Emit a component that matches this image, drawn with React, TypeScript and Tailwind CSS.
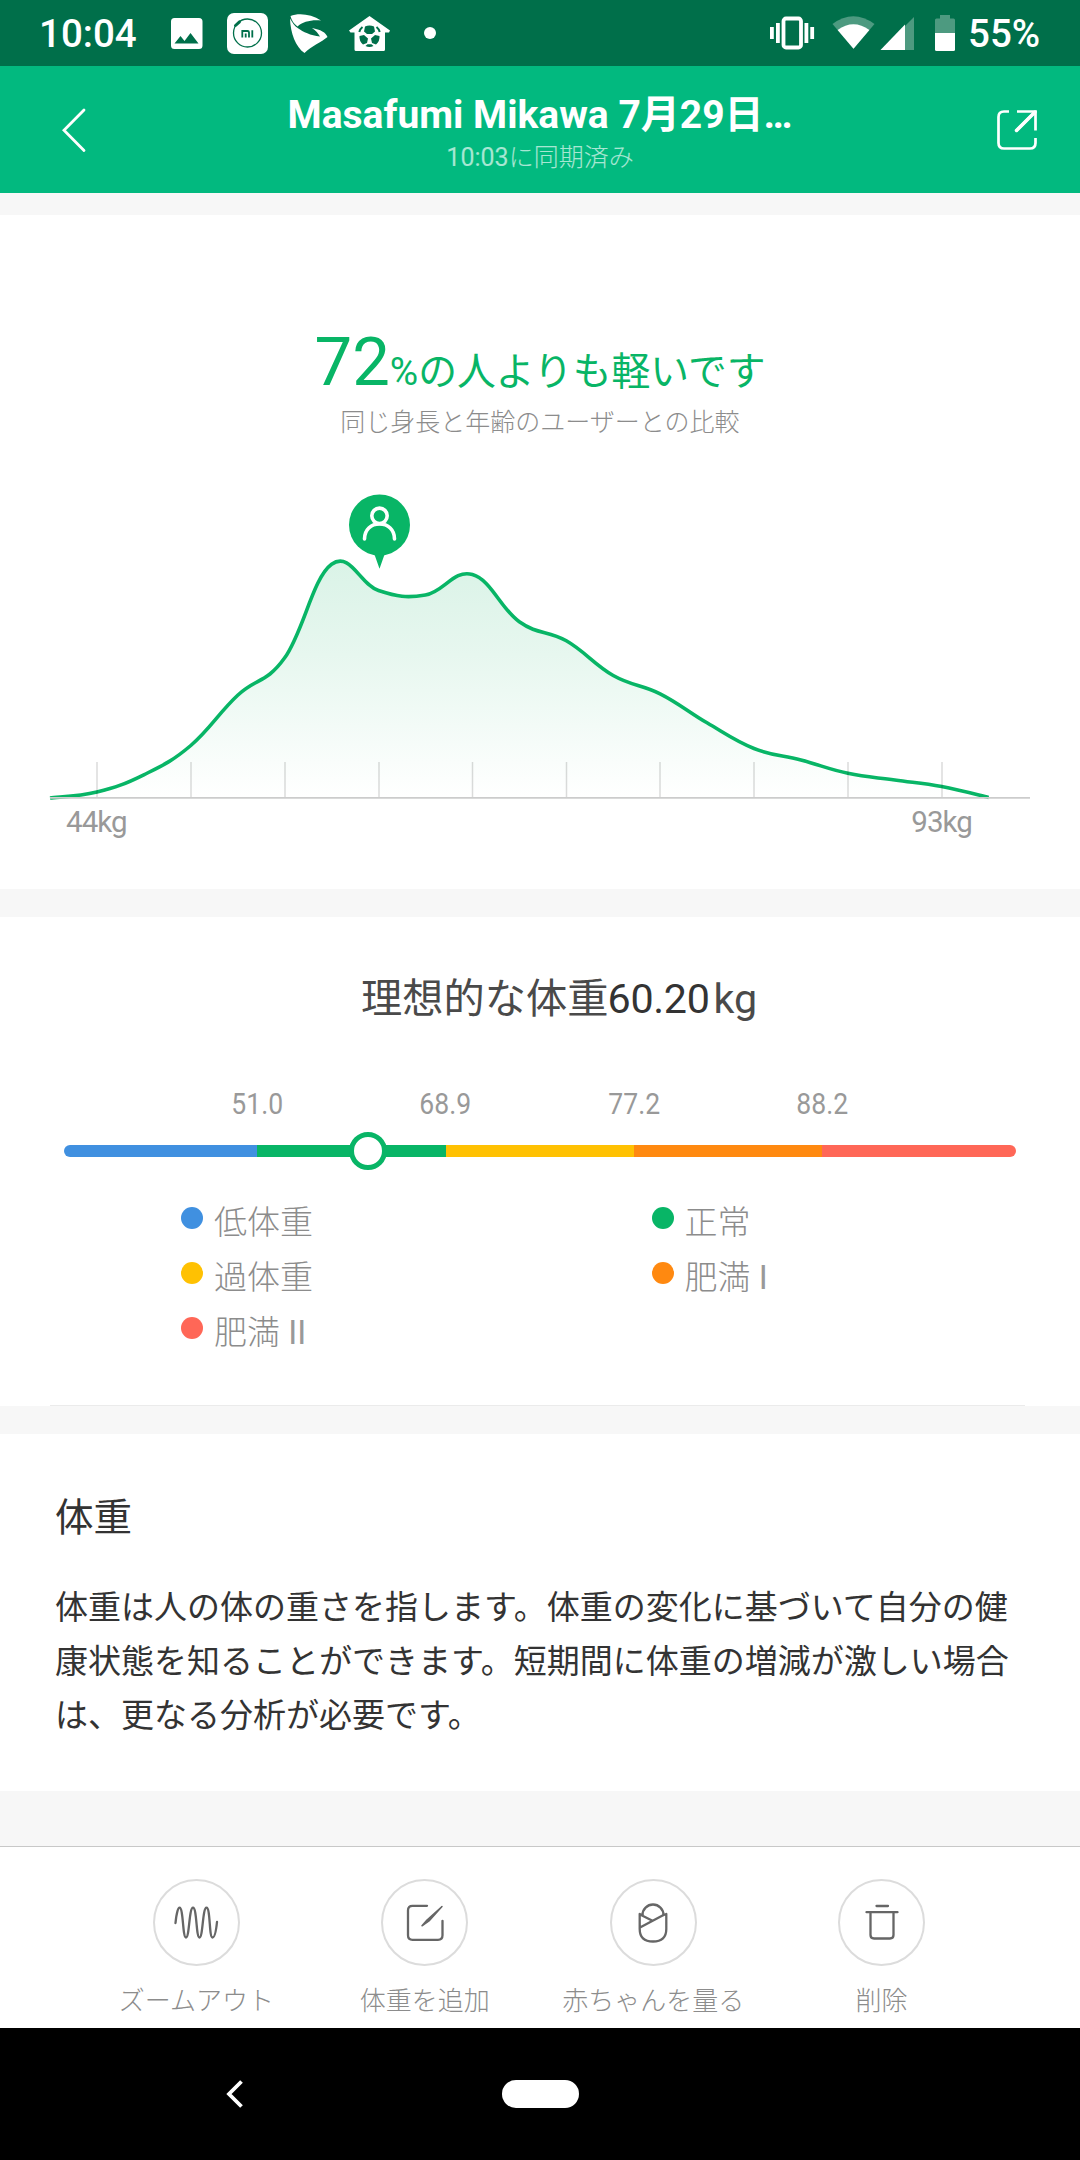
import type { ReactNode } from "react";

type Point = [number, number];

const curve: Point[] = [
  [50, 798],
  [96.9, 792],
  [143.8, 774.8],
  [190.8, 745.5],
  [237.7, 695.3],
  [284.7, 657.8],
  [331.6, 564.3],
  [378.5, 590.5],
  [425.4, 595],
  [472.4, 574.5],
  [519.3, 621.8],
  [566.3, 640.8],
  [613.2, 675.5],
  [660.1, 693.8],
  [707, 722.8],
  [754, 748.5],
  [800.9, 760],
  [847.9, 773.3],
  [894.8, 780],
  [941.7, 786.5],
  [988.7, 797.5]
];

const ticks = [97, 191, 285, 379, 472.5, 566.5, 660, 754, 848, 942];

const segments = [
  { width: 193.5, className: "bg-[#4090e0] rounded-l-full" },
  { width: 188.5, className: "bg-[#08b566]" },
  { width: 188.5, className: "bg-[#ffc102]" },
  { width: 188, className: "bg-[#ff8910]" },
  { width: 194, className: "bg-[#ff6757] rounded-r-full" }
];

const thresholds = ["51.0", "68.9", "77.2", "88.2"];

const legend = [
  { label: "低体重", grade: "", dot: "bg-[#4090e0]" },
  { label: "正常", grade: "", dot: "bg-[#08b566]" },
  { label: "過体重", grade: "", dot: "bg-[#ffc102]" },
  { label: "肥満", grade: " I", dot: "bg-[#ff8910]" },
  { label: "肥満", grade: " II", dot: "bg-[#ff6757]" }
];

function smoothPath(points: Point[]) {
  const k = 0.2;
  let d = `M${points[0][0]} ${points[0][1]}`;
  for (let i = 1; i < points.length; i++) {
    const p0 = points[Math.max(i - 2, 0)];
    const p1 = points[i - 1];
    const p2 = points[i];
    const p3 = points[Math.min(i + 1, points.length - 1)];
    d += `C${p1[0] + (p2[0] - p0[0]) * k} ${p1[1] + (p2[1] - p0[1]) * k} ${p2[0] - (p3[0] - p1[0]) * k} ${p2[1] - (p3[1] - p1[1]) * k} ${p2[0]} ${p2[1]}`;
  }
  return d;
}

function StatusBar() {
  return (
    <div className="flex h-[66px] items-center bg-[#006f4a] pl-[39px] pr-[41px] text-[38.5px] font-medium leading-[66px] text-white">
      <span className="w-[131px] pt-px">10:04</span>
      <svg className="h-[66px] w-[280px]" viewBox="170 0 280 66" fill="#fff">
        <path
          fillRule="evenodd"
          d="M174.500 18h24.500a3.500 3.500 0 0 1 3.500 3.500v24a3.500 3.500 0 0 1-3.500 3.500h-24.500a3.500 3.500 0 0 1-3.500-3.500v-24a3.500 3.500 0 0 1 3.500-3.500zM174.500 43.500h24l-8-10.500-6 8-4-5z"
        />
        <rect x="227" y="13" width="41" height="41" rx="7" />
        <circle cx="247.500" cy="33" r="14" fill="none" stroke="#006f4a" strokeWidth="1.300" />
        <path d="M235.500 26l4.500-4.500" stroke="#fff" strokeWidth="8" />
        <path d="M235.500 25.500l4-3.700" stroke="#006f4a" strokeWidth="3" strokeLinecap="round" />
        <path
          d="M242.300 37.500v-6.500h5.200q1.500 0 1.500 1.500v5M245.700 33.500v4M252.300 30.300v7.200"
          fill="none"
          stroke="#006f4a"
          strokeWidth="1.800"
        />
        <path d="M290.500 16c8-3.500 21-2 30.500 4.500-9-1-18.500 1-23.500 6q-5.500-4-7-10.500zM290 18.500c2.500 4.500 4.500 7.500 8 9.700 5 3.500 12.500 7.300 22 8.300-2-3-4-6-8-8.500 8.500 1.500 14 4.500 15.500 9-6 5-16 9-23 16-9-6-14-20-14.500-34.500z" />
        <path d="M369.500 16l20.500 14.500-1 2h-4v17q0 1.500-1.500 1.500h-27.500q-1.500 0-1.500-1.500v-17h-4l-1.500-2z" />
        <g fill="#006f4a">
          <path d="M365 26.500q4.500-2 9 0l1 5-3 2.500h-5l-3-2.500zM359.500 36l4.500-1 4 3.500-1 4.500-4 1.500q-4-3.500-3.500-8.500zM379.500 36l-4.500-1-4 3.500 1 4.500 4 1.500q4-3.500 3.500-8.500zM365.500 46l2-1.800h4l2 1.800q-4 2-8 0z" />
          <path
            d="M359.300 32q.7-3 3.200-5M379.700 32q-.7-3-3.200-5"
            fill="none"
            stroke="#006f4a"
            strokeWidth="2"
          />
        </g>
        <circle cx="430" cy="33" r="6" />
      </svg>
      <svg className="ml-auto h-[66px] w-[190px]" viewBox="768 0 190 66" fill="#fff">
        <rect x="783.500" y="18.500" width="17.500" height="29" rx="2.500" fill="none" stroke="#fff" strokeWidth="3.800" />
        <path d="M776 23h3.800v20H776zM770 27h3.800v12H770zM804.500 23h3.800v20h-3.800zM810.300 27h3.800v12h-3.800z" />
        <path d="M832.500 24q20.700-15.500 42 0l-21 24.700z" opacity=".3" />
        <path d="M837.600 30q15.800-11.500 31.800 0l-15.900 18.700z" />
        <path d="M914 17v33h-33z" opacity=".3" />
        <path d="M905 24.500V50h-24.500z" />
        <path d="M940 18.500V15h10v3.500h3.500q1.500 0 1.500 1.500v13h-20V20q0-1.500 1.500-1.500z" opacity=".3" />
        <path d="M935 33h20v16.500q0 1.500-1.500 1.500h-17q-1.500 0-1.500-1.500z" />
      </svg>
      <span className="w-[81px] pl-[10px] pt-px">55%</span>
    </div>
  );
}

function Header() {
  return (
    <header className="flex h-[127px] items-start justify-between bg-[#02b97f] text-white">
      <svg className="h-[127px] w-[140px]" viewBox="0 66 140 127" fill="none" stroke="#fff" strokeWidth="2.800">
        <path d="M84 110L64 130.300l20 20.200" strokeLinecap="round" />
      </svg>
      <div className="pt-[24px] text-center">
        <h1 className="text-[39px] font-bold leading-[50px]">Masafumi Mikawa 7月29日…</h1>
        <p className="pt-px text-[25px] font-light leading-[34px] text-white/65">
          <span className="font-normal">10:03</span>に同期済み
        </p>
      </div>
      <svg className="h-[127px] w-[140px]" viewBox="940 66 140 127" fill="none" stroke="#fff" strokeWidth="2.700">
        <path d="M1009 111.500h-5q-5.500 0-5.500 5.500v26q0 5.500 5.500 5.500h26q5.500 0 5.500-5.500v-5" />
        <path d="M1017 111.500h18.500v19M1035 112l-19 19" />
        <path d="M1035 112l-18.500 18.500" strokeWidth="3.500" strokeLinecap="round" />
      </svg>
    </header>
  );
}

function DistributionChart() {
  const line = smoothPath(curve);

  return (
    <svg className="block h-[326px] w-full" viewBox="0 480 1080 326" fill="none">
      <defs>
        <linearGradient id="area" gradientUnits="userSpaceOnUse" x1="0" y1="560" x2="0" y2="797">
          <stop offset="0" stopColor="#daf3e7" />
          <stop offset=".4" stopColor="#e7f7ef" />
          <stop offset="1" stopColor="#ffffff" />
        </linearGradient>
      </defs>
      <path d={`${line}L50 797.500Z`} fill="url(#area)" />
      <path d={line} stroke="#08b566" strokeWidth="3.600" />
      {ticks.map((x) => (
        <path key={x} d={`M${x} 762V797`} stroke="#000" strokeOpacity=".14" strokeWidth="1.500" />
      ))}
      <path d="M50 797.800H1030" stroke="#cccccc" strokeWidth="1.800" />
      <circle cx="379.500" cy="525" r="30.500" fill="#08b566" />
      <path d="M371.500 552h16q-2.500 1.500-3.500 4l-4.500 12.800-4.500-12.800q-1-2.500-3.500-4z" fill="#08b566" />
      <g stroke="#fff" strokeWidth="3.600" strokeLinecap="round">
        <circle cx="379.500" cy="515.800" r="7.700" />
        <path d="M364.500 539c0-9.500 6.500-15 15-15s15 5.500 15 15" />
      </g>
    </svg>
  );
}

function Comparison() {
  return (
    <section className="h-[674px] bg-white pt-[114px]">
      <h2 className="flex h-[77px] items-baseline justify-center text-[#08b566]">
        <span className="text-[67px] leading-[67px]">72</span>
        <span className="text-[38.8px] leading-none">%の人よりも軽いです</span>
      </h2>
      <p className="mb-[40px] text-center text-[25px] font-light leading-[34px] text-[#8c8c8c]">
        同じ身長と年齢のユーザーとの比較
      </p>
      <DistributionChart />
      <div className="flex justify-between pl-[66px] pr-[108px] pt-px text-[29.5px] leading-[30px] tracking-[-0.9px] text-[#999]">
        <span>44kg</span>
        <span>93kg</span>
      </div>
    </section>
  );
}

function IdealWeight() {
  return (
    <section className="h-[489px] bg-white pt-[57px]">
      <h2 className="pl-[361px] text-[41.25px] leading-[50px] text-[#4a4a4a]">
        理想的な体重<span className="-ml-px tracking-[-0.3px] text-[#333]">60.20</span>
        <span className="ml-[4px]">kg</span>
      </h2>
      <div className="mt-[65px] flex pl-[163px] text-[29.5px] leading-[30px] text-[#999]">
        {thresholds.map((value) => (
          <span key={value} className="w-[188.4px] scale-x-90 text-center">
            {value}
          </span>
        ))}
      </div>
      <div className="relative mx-[64px] mt-[26px] flex h-[12px]">
        {segments.map((segment) => (
          <div key={segment.className} className={segment.className} style={{ width: segment.width }} />
        ))}
        <div className="absolute -top-[13px] left-[285px] h-[38px] w-[38px] rounded-full border-[5px] border-[#08b566] bg-white" />
      </div>
      <ul className="ml-[181px] mt-[38px] grid grid-cols-[470.5px_1fr] text-[33px] font-light leading-[55px] text-[#8c8c8c]">
        {legend.map((item) => (
          <li key={item.dot} className="flex h-[55px] items-center gap-[11px]">
            <span className={`mb-[10px] h-[22px] w-[22px] rounded-full ${item.dot}`} />
            <span>
              {item.label}
              {item.grade && <span className="font-normal text-[#999]">{item.grade}</span>}
            </span>
          </li>
        ))}
      </ul>
      <div className="ml-[50px] mr-[55px] mt-[45px] h-px bg-[#ebebeb]" />
    </section>
  );
}

function Description() {
  return (
    <section className="h-[357px] bg-white px-[55px] pt-[59px] text-[#333]">
      <h3 className="text-[38.5px] leading-[50px]">体重</h3>
      <p className="mt-[38px] text-[33px] leading-[54px]">
        体重は人の体の重さを指します。体重の変化に基づいて自分の健康状態を知ることができます。短期間に体重の増減が激しい場合は、更なる分析が必要です。
      </p>
    </section>
  );
}

function Action({ label, children }: { label: string; children: ReactNode }) {
  return (
    <button type="button" className="flex w-[228.4px] flex-col items-center">
      <span className="flex h-[87px] w-[87px] items-center justify-center rounded-full border-2 border-[#dcdcdc]">
        <svg
          className="h-[60px] w-[60px]"
          viewBox="-30 -30 60 60"
          fill="none"
          stroke="#666"
          strokeWidth="2.300"
          strokeLinecap="round"
          strokeLinejoin="round"
        >
          {children}
        </svg>
      </span>
      <span className="mt-[18px] whitespace-nowrap text-[26px] font-light leading-[34px] text-[#8c8c8c]">{label}</span>
    </button>
  );
}

function ActionBar() {
  return (
    <nav className="flex h-[182px] justify-center border-t border-[#c8c8c8] bg-white pr-[2px] pt-[32px]">
      <Action label="ズームアウト">
        <path d="M-20.500 0C-19.500-10-18-15.300-16.500-15.300-12.500-15.300-13.500 14.500-10 14.500S-7-15.300-3-15.300 0 14.500 3.500 14.500 6.500-15.300 10.500-15.300 13 14.500 16.500 14.500C18.500 14.500 20 9 21-1" />
      </Action>
      <Action label="体重を追加">
        <path d="M2-17.200h-14.500q-4.500 0-4.500 4.500v25q0 4.500 4.500 4.500h25.500q4.500 0 4.500-4.500v-14.500" />
        <path d="M17-16.500L2-3-3 2.800 4-2z" fill="#666" strokeWidth="1.500" />
      </Action>
      <Action label="赤ちゃんを量る">
        <path d="M-10.500-8a10.500 10.500 0 1 1 21 0" />
        <path d="M-10.500-8l-2.800-1v15q0 12.500 13.300 12.500T13.300 6V-9l-2.800 1L-13 4.500M-13-8.500L-1-2.500" />
      </Action>
      <Action label="削除">
        <path d="M-5.500-17h11.500M-15.500-10.800h31M-11.500-10.500v22.500q0 3.500 3.500 3.500h16q3.500 0 3.500-3.500v-22.500" />
      </Action>
    </nav>
  );
}

export default function App() {
  return (
    <main className="flex h-[2160px] w-[1080px] flex-col overflow-hidden bg-[#f7f7f7] font-['Roboto','Noto_Sans_CJK_JP',sans-serif]">
      <StatusBar />
      <Header />
      <div className="mt-[22px] flex flex-col gap-[28px]">
        <Comparison />
        <IdealWeight />
        <Description />
      </div>
      <div className="mt-auto">
        <ActionBar />
        <div className="grid h-[132px] grid-cols-3 items-center justify-items-center bg-black">
          <svg className="ml-[109px] h-[30px] w-[18px]" viewBox="0 0 18 30" fill="none" stroke="#fff" strokeWidth="3.800">
            <path d="M15.500 2.500L3 15l12.500 12.500" />
          </svg>
          <div className="h-[28px] w-[77px] rounded-full bg-white" />
        </div>
      </div>
    </main>
  );
}
